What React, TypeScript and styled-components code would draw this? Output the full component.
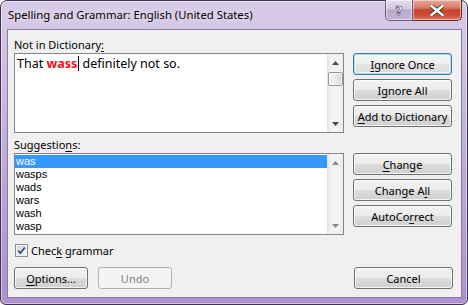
import React from 'react'
import styled, { createGlobalStyle } from 'styled-components'

const GlobalStyle = createGlobalStyle`
	html, body {
		margin: 0;
		padding: 0;
	}
	body {
		width: 468px;
		height: 305px;
		overflow: hidden;
		font-family: 'Noto Sans', 'Open Sans', sans-serif;
		background: #fff;
	}
`

const uiFont = `'Noto Sans', 'Open Sans', sans-serif`

const Window = styled.div`
	box-sizing: border-box;
	width: 468px;
	height: 305px;
	display: flex;
	flex-direction: column;
	padding: 0 5px 6px 6px;
	border: 1px solid #3f3352;
	border-radius: 7px 7px 6px 6px;
	background: linear-gradient(180deg, #d8cce8 0%, #c8b6de 35%, #b8a0d4 70%, #ad90cd 100%);
	box-shadow: inset 0 0 0 1px rgba(255, 255, 255, 0.5);
`

const TitleBar = styled.div`
	height: 28px;
	display: flex;
	align-items: flex-start;
	justify-content: space-between;
`

const Title = styled.div`
	margin: 6px 0 0 1px;
	font-family: ${uiFont};
	font-size: 11.3px;
	line-height: 16px;
	color: #000;
	text-shadow: 0 0 6px rgba(255, 255, 255, 0.9);
`

const CaptionGroup = styled.div`
	display: flex;
	margin-top: -1px;
`

const CaptionButton = styled.div<{ $close?: boolean }>`
	box-sizing: border-box;
	height: 21px;
	width: ${p => (p.$close ? '49px' : '28px')};
	display: flex;
	align-items: center;
	justify-content: center;
	border: 1px solid ${p => (p.$close ? '#6b2a22' : '#6b5c7c')};
	border-top: none;
	border-left: ${p => (p.$close ? 'none' : '1px solid #6b5c7c')};
	border-radius: ${p => (p.$close ? '0 0 5px 0' : '0 0 0 5px')};
	background: ${p =>
		p.$close
			? 'linear-gradient(180deg, #e9a99a 0%, #d67a68 40%, #c5432f 50%, #d0503a 80%, #e1836a 100%)'
			: 'linear-gradient(180deg, #e6def0 0%, #d1c6df 45%, #b9aacb 50%, #c2b4d3 100%)'};
	box-shadow: inset 0 0 0 1px rgba(255, 255, 255, 0.45);
`

const HelpGlyph = styled.span`
	font-family: 'DejaVu Sans', sans-serif;
	font-weight: bold;
	font-size: 13px;
	line-height: 13px;
	color: #fff;
	-webkit-text-stroke: 0.6px #3d3550;
	margin-top: 1px;
`

const Client = styled.div`
	flex: 1;
	display: flex;
	flex-direction: column;
	padding: 7px 8px 0 6px;
	background: #f0f0f0;
	border: 1px solid #8a7b9c;
	font-family: ${uiFont};
	font-size: 11px;
	color: #000;
`

const Section = styled.div<{ $gap?: number }>`
	display: flex;
	gap: 9px;
	margin-top: ${p => p.$gap ?? 0}px;
`

const Column = styled.div`
	width: 330px;
	display: flex;
	flex-direction: column;
`

const Label = styled.div`
	height: 16px;
	line-height: 16px;
`

const Key = styled.span`
	text-decoration: underline;
	text-underline-offset: 2px;
`

const Box = styled.div<{ $height: number }>`
	box-sizing: border-box;
	height: ${p => p.$height}px;
	display: flex;
	background: #fff;
	border: 1px solid #828790;
`

const BoxContent = styled.div`
	flex: 1;
	min-width: 0;
`

const Sentence = styled.div`
	padding: 1px 0 0 2px;
	font-size: 12.5px;
	line-height: 18px;
	white-space: nowrap;
`

const Misspelled = styled.span`
	color: #e5151c;
	font-weight: bold;
`

const Caret = styled.span`
	display: inline-block;
	width: 1px;
	height: 15px;
	margin-left: 1px;
	vertical-align: -3px;
	background: #000;
`

const List = styled.div`
	padding-top: 1px;
`

const Item = styled.div<{ $selected?: boolean }>`
	height: 13px;
	line-height: 13px;
	padding-left: 1px;
	font-family: 'Liberation Sans', Arial, sans-serif;
	font-size: 11px;
	background: ${p => (p.$selected ? '#3399ff' : 'transparent')};
	color: ${p => (p.$selected ? '#fff' : '#000')};
`

const ScrollBar = styled.div`
	width: 16px;
	display: flex;
	flex-direction: column;
	align-items: center;
	background: linear-gradient(90deg, #e3e3e3 0%, #f3f3f3 25%, #f3f3f3 75%, #ebebeb 100%);
`

const ArrowCell = styled.div`
	height: 17px;
	width: 100%;
	display: flex;
	align-items: center;
	justify-content: center;
`

const Track = styled.div`
	flex: 1;
	width: 100%;
	display: flex;
	flex-direction: column;
	align-items: center;
`

const Thumb = styled.div`
	box-sizing: border-box;
	width: 15px;
	height: 14px;
	margin-top: 1px;
	border: 1px solid #979797;
	border-radius: 2px;
	background: linear-gradient(90deg, #f6f6f6 0%, #e9e9e9 50%, #d6d6d6 100%);
	box-shadow: inset 0 0 0 1px rgba(255, 255, 255, 0.7);
`

const ButtonStack = styled.div`
	padding-top: 16px;
	display: flex;
	flex-direction: column;
	gap: 4px;
`

const Button = styled.button<{ $width?: number; $default?: boolean }>`
	box-sizing: border-box;
	width: ${p => p.$width ?? 99}px;
	height: 22px;
	padding: 0;
	font-family: ${uiFont};
	font-size: 11px;
	color: #000;
	border: 1px solid ${p => (p.$default ? '#3c7fb1' : '#707070')};
	border-radius: 3px;
	background: ${p =>
		p.$default
			? 'linear-gradient(180deg, #f6f6f6 0%, #eeeeee 50%, #e4e4e4 51%, #dbdbdb 100%)'
			: 'linear-gradient(180deg, #f2f2f2 0%, #ebebeb 50%, #dddddd 51%, #cfcfcf 100%)'};
	box-shadow: ${p =>
		p.$default ? 'inset 0 0 0 1px #9fdcf6, inset 0 0 0 2px rgba(255,255,255,0.6)' : 'inset 0 0 0 1px rgba(255, 255, 255, 0.75)'};

	&:disabled {
		border-color: #adb2b5;
		background: #f4f4f4;
		color: #838383;
		box-shadow: none;
	}
`

const CheckRow = styled.div`
	margin-top: 7px;
	height: 17px;
	display: flex;
	align-items: center;
	padding-left: 1px;
`

const CheckBox = styled.div`
	box-sizing: border-box;
	width: 13px;
	height: 13px;
	margin-right: 3px;
	border: 1px solid #8e8f8f;
	background: #f4f4f4;
	display: flex;
	align-items: center;
	justify-content: center;
`

const CheckInner = styled.div`
	width: 9px;
	height: 9px;
	background: linear-gradient(135deg, #cbcfd5 0%, #e7e9ec 60%, #f6f6f6 100%);
	position: relative;
`

const Footer = styled.div`
	margin-top: 8px;
	display: flex;
	justify-content: space-between;
`

const FooterGroup = styled.div`
	display: flex;
	gap: 10px;
`

const Arrow = ({ up, color }: { up?: boolean; color: string }) => (
	<svg width="7" height="4" viewBox="0 0 7 4">
		<path d={up ? 'M0 4 L3.5 0 L7 4 Z' : 'M0 0 L3.5 4 L7 0 Z'} fill={color} />
	</svg>
)

const suggestions = ['was', 'wasps', 'wads', 'wars', 'wash', 'wasp']

export default function App() {
	return (
		<>
			<GlobalStyle />
			<Window>
				<TitleBar>
					<Title>Spelling and Grammar: English (United States)</Title>
					<CaptionGroup>
						<CaptionButton>
							<HelpGlyph>?</HelpGlyph>
						</CaptionButton>
						<CaptionButton $close>
							<svg width="14" height="11" viewBox="0 0 14 11">
								<path
									d="M1.5 1 L12.5 10 M12.5 1 L1.5 10"
									stroke="#4a2a26"
									strokeWidth="4.2"
									strokeLinecap="round"
								/>
								<path
									d="M1.5 1 L12.5 10 M12.5 1 L1.5 10"
									stroke="#fff"
									strokeWidth="2.6"
									strokeLinecap="round"
								/>
							</svg>
						</CaptionButton>
					</CaptionGroup>
				</TitleBar>
				<Client>
					<Section>
						<Column>
							<Label>
								Not in Dictionary<Key>:</Key>
							</Label>
							<Box $height={80}>
								<BoxContent>
									<Sentence>
										That <Misspelled>wass</Misspelled>
										<Caret /> definitely not so.
									</Sentence>
								</BoxContent>
								<ScrollBar>
									<ArrowCell>
										<Arrow up color="#4a4a4a" />
									</ArrowCell>
									<Track>
										<Thumb />
									</Track>
									<ArrowCell>
										<Arrow color="#4a4a4a" />
									</ArrowCell>
								</ScrollBar>
							</Box>
						</Column>
						<ButtonStack>
							<Button $default>
								<Key>I</Key>gnore Once
							</Button>
							<Button>
								I<Key>g</Key>nore All
							</Button>
							<Button>
								<Key>A</Key>dd to Dictionary
							</Button>
						</ButtonStack>
					</Section>
					<Section $gap={4}>
						<Column>
							<Label>
								Suggestio<Key>n</Key>s:
							</Label>
							<Box $height={82}>
								<BoxContent>
									<List>
										{suggestions.map((s, i) => (
											<Item key={s} $selected={i === 0}>
												{s}
											</Item>
										))}
									</List>
								</BoxContent>
								<ScrollBar>
									<ArrowCell>
										<Arrow up color="#8a8a8a" />
									</ArrowCell>
									<Track />
									<ArrowCell>
										<Arrow color="#8a8a8a" />
									</ArrowCell>
								</ScrollBar>
							</Box>
						</Column>
						<ButtonStack>
							<Button>
								<Key>C</Key>hange
							</Button>
							<Button>
								Change A<Key>l</Key>l
							</Button>
							<Button>
								AutoCo<Key>r</Key>rect
							</Button>
						</ButtonStack>
					</Section>
					<CheckRow>
						<CheckBox>
							<CheckInner>
								<svg width="9" height="9" viewBox="0 0 9 9" style={{ position: 'absolute', left: 0, top: 0 }}>
									<path d="M1.3 4.6 L3.4 7 L7.8 1.5" stroke="#3c4f86" strokeWidth="1.8" fill="none" />
								</svg>
							</CheckInner>
						</CheckBox>
						Chec<Key>k</Key>&nbsp;grammar
					</CheckRow>
					<Footer>
						<FooterGroup>
							<Button $width={74}>
								<Key>O</Key>ptions...
							</Button>
							<Button $width={74} disabled>
								Undo
							</Button>
						</FooterGroup>
						<Button>Cancel</Button>
					</Footer>
				</Client>
			</Window>
		</>
	)
}
